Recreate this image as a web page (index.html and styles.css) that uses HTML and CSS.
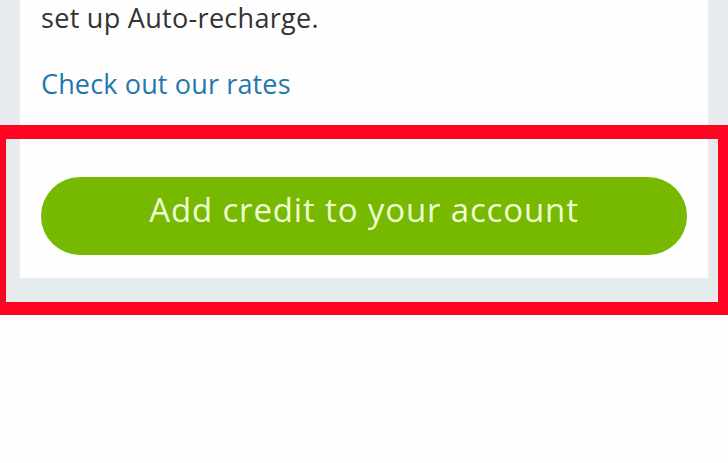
FILE: index.html
```html
<!DOCTYPE html>
<html>
<head>
    <title>Skype Credit</title>
    <meta charset="UTF-8">
    <link rel="stylesheet" href="styles.css">
</head>
<body>
    <div class="page">
        <div class="card">
            <p class="intro">set up Auto-recharge.</p>
            <a class="rates-link" href="#">Check out our rates</a>
            <div class="actions">
                <button class="add-credit">Add credit to your account</button>
            </div>
        </div>
    </div>
    <div class="highlight"></div>
</body>
</html>
```

FILE: styles.css
```css
body {
    margin: 0;
    min-height: 100vh;
    background: #fefcff;
    font-family: 'Open Sans', 'Noto Sans', Arial, sans-serif;
    position: relative;
}

.page {
    background: #e6ebed;
    padding: 0 20px 24px;
}

.card {
    background: #fefefe;
    padding: 0 21px 23px;
}

.intro {
    margin: 0;
    font-size: 27px;
    line-height: 36px;
    letter-spacing: 0.3px;
    color: #333333;
}

.rates-link {
    display: block;
    margin-top: 30px;
    font-size: 27px;
    line-height: 36px;
    letter-spacing: 0.15px;
    color: #2378ad;
    text-decoration: none;
}

.actions {
    padding-top: 75px;
}

.add-credit {
    display: block;
    width: 100%;
    height: 78px;
    padding: 0 0 14px;
    border: none;
    border-radius: 39px;
    background: #77b800;
    color: #eefed2;
    font-family: inherit;
    font-size: 33px;
    letter-spacing: 0.85px;
    cursor: pointer;
}

.highlight {
    position: absolute;
    top: 125px;
    left: 0;
    width: 728px;
    height: 190px;
    box-sizing: border-box;
    border-style: solid;
    border-color: #ff0322;
    border-width: 14px 10px 13px 6px;
    pointer-events: none;
}
```
